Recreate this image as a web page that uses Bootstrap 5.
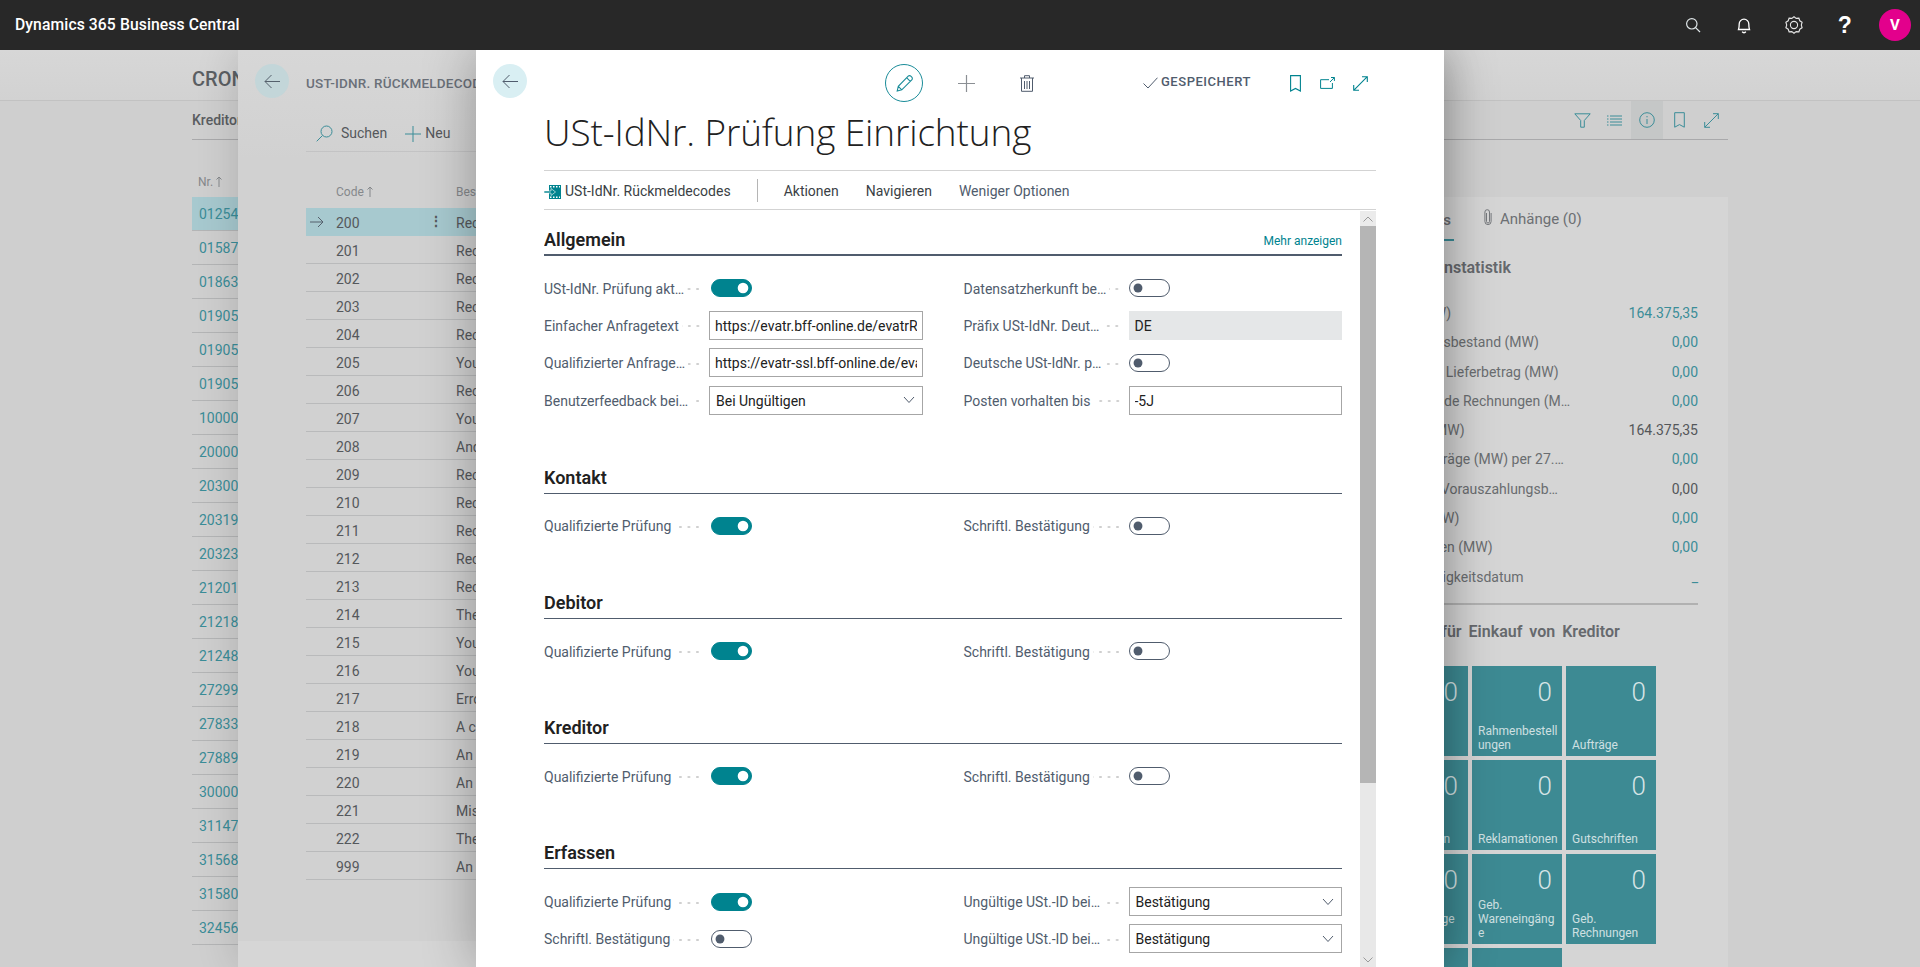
<!DOCTYPE html>
<html lang="de">
<head>
<meta charset="utf-8">
<title>USt-IdNr. Prüfung Einrichtung</title>
<link href="https://cdn.jsdelivr.net/npm/bootstrap@5.3.0/dist/css/bootstrap.min.css" rel="stylesheet">
<style>
:root{--ui:"Open Sans","Noto Sans",sans-serif;--teal:#00838f;--slate:#505c6d;--dimteal:#3b8d98}
html,body{height:100%;overflow:hidden}
body{font-family:Roboto,"Liberation Sans",sans-serif;font-size:14px;color:#212121;background:#cfcfcf}
svg{display:block;flex:none}
.topbar{height:50px;background:#282828;color:#fff;position:relative;z-index:10}
.appname{margin-left:15px;font-size:15.7px;font-weight:500;letter-spacing:.1px}
.topico{width:50.5px}
.avatar{width:32px;height:32px;background:#e3008c;font-weight:700;font-size:15px;margin:0 9px 0 9px}
.bighelp{font-size:23px;font-weight:700;line-height:1;font-family:"Liberation Sans",sans-serif}
.win{position:absolute;top:50px;bottom:0}
/* base page */
.basepage{left:0;right:0;color:#5a5d61;background:#cfcfcf}
.stripe{height:51px;background:linear-gradient(#d7d7d7,#d2d2d2);border-bottom:1px solid #c2c2c2;padding:17px 0 0 192px;font-size:20px;font-weight:500;line-height:24px;color:#5b5f63}
.basebody{margin:0 192px}
.tabline{height:39px;border-bottom:1px solid #a9a9ab;font-weight:500}
.ibtn{width:32.4px;height:38px;margin-top:0}
.ibtn.on{background:#c5c7c7}
.listcol{width:1168px;padding-top:33px}
.colhead{height:24px;padding-left:6px;font-size:12px;line-height:18px;color:#85888b}
.uparrow{display:inline-block;vertical-align:-1px;margin-left:3px}
.nrrow{height:34px;border-bottom:1px solid #b4b5b6;padding-left:7px;line-height:35px;font-size:14px;color:var(--dimteal)}
.nrrow.sel{background:#a7c9cf}
.factbox{width:368px;margin-top:57px;height:780px;overflow:hidden;background:#d5d5d5;padding:0 30px 0 18px}
.factabs{height:44px;font-size:15px;line-height:46px;color:#6c6f73;position:relative}
.factab1{width:76px;border-bottom:2px solid var(--dimteal);height:44px;font-weight:600;text-align:right;padding-right:3px}
.factab2{margin-left:30px}
.factitle{font-weight:600;font-size:16px;line-height:20px;margin:17px 0 21px;color:#66696d}
.factitle.spaced{word-spacing:3px;margin-left:7px}
.statrow{height:29.3px;line-height:29px;font-size:14px;color:#6a6d70}
.statrow .stv{color:var(--dimteal)}
.statrow .stk{color:#54575a}
.facsep{border-top:2px solid #b1b1b1;margin:11px 0 17px}
.tilegrid{display:grid;grid-template-columns:90px 90px 90px;gap:4px;margin-top:24px}
.tile{height:90px;background:#3d8a93;color:#cfe0e2;padding:0 2px 4px 6px;font-size:12px;line-height:14px;white-space:nowrap}
.tile b{font-weight:300;font-size:26px;line-height:30px;margin-top:11px;margin-right:8px;color:#d6e4e6}
/* second window */
.panel2{left:238px;width:1202px;background:linear-gradient(#d7d7d7 0,#d1d1d1 110px);box-shadow:0 0 40px rgba(0,0,0,.16);color:#55585c;z-index:2}
.panelhead{height:64px;padding:14px 0 0 17px}
.backbtn{width:34px;height:34px;background:#c3d6d9}
.panelname{margin-left:17px;font-size:13.5px;font-weight:500;letter-spacing:.2px;color:#6a7079;margin-top:9px}
.paneltools{height:38px;margin-left:68px;border-bottom:1px solid #c3c3c4;padding:2px 0 0 6px}
.paneltools span{font-size:14px}
.m-neu{margin-left:18px}
.panelgrid{margin-left:68px;padding-top:29px}
.chead{height:27px;font-size:12px;line-height:22px;color:#85888b}
.crow{height:28px;border-bottom:1px solid #b9babb;line-height:30px;font-size:14px}
.crow.sel{background:#a7c9cf;border-bottom-color:#a7c9cf}
.c1{width:30px;flex:none}.c2{width:90px;flex:none}.c3{width:30px;flex:none}
.kebab{padding-left:3px;line-height:27px}
.panelfoot{position:absolute;left:0;right:0;bottom:0;height:26px;background:#d6d6d6}
/* front window */
.frontwin{left:476px;width:968px;background:#fff;box-shadow:0 0 50px rgba(0,0,0,.3);z-index:3;overflow:hidden}
.fronttools{height:38px;margin-top:14px;padding-left:17px;align-items:center}
.backbtn2{width:34px;height:34px;background:#d9eff3;margin-top:-4px}
.editcircle{width:38px;height:38px;border:1px solid #1a8c99;margin-left:358px}
.m-plus{margin-left:35px}.m-trash{margin-left:45px}.m-check{margin-left:109px}
.saved{margin-left:3px;font-size:13px;font-weight:500;letter-spacing:.52px;color:#505c6d;line-height:16px;margin-top:-2px}
.m-book{margin-left:39px}.m-open{margin-left:19px}.m-exp{margin-left:18px}
.pagetitle{font-family:var(--ui);font-weight:300;font-size:36.9px;line-height:54px;margin:3px 0 0 68px;height:65px;color:#212121;white-space:nowrap;letter-spacing:-.1px}
.rule{height:1px;background:#d3d3d3;margin:0 68px}
.actionbar{height:38px;margin:0 68px;padding-top:3px;font-size:14px;color:#3b3f45}
.actionbar .sep{width:1px;height:23px;background:#b5b5b5;margin:-2px 26px 0 26px}
.m-a{margin-right:27px}
.muted{color:#505c6d}
.formscroll{height:757px;overflow:hidden;margin-left:68px;margin-right:68px;position:relative}
.scrollrail{position:absolute;top:1px;right:0;width:16px;bottom:0;background:#e8e8e8}
.railbtn{height:15px;background:#ebebeb}
.railbtn.dn{background:none}
.railthumb{height:557px;background:#b5b5b5}
.formin{margin-right:34px;padding-top:18px}
.sechead{height:29px;border-bottom:1px solid var(--slate);margin-top:45.4px;font-size:18px;line-height:26px;font-weight:600;color:#212121}
.sechead.first{margin-top:0;height:28px;border-bottom-width:2px;line-height:24px}
.sechead.second{margin-top:46px}
.moreln{font-size:12px;color:var(--teal);font-weight:400;line-height:20px;margin-top:3px}
.fields{display:grid;grid-template-columns:1fr 1fr;column-gap:41px;margin-top:13.5px}
.fld{height:37.33px}
.lbl{width:165px;flex:none;color:var(--slate);font-size:14px;white-space:nowrap;padding-top:2px}
.dots{flex:1 1 0;height:6px;min-width:0;margin:0 7px 0 3px;background:radial-gradient(circle,#cfcfcf 1px,transparent 1.4px) right center/8.5px 6px repeat-x}
.ctl{width:213.5px;flex:none}
.form-control.bcin,.form-select.bcin{height:29px;min-height:0;border:1px solid #a6a6a6;border-radius:0;padding:1px 5px 0;font-size:14px;color:#212121;box-shadow:none;font-family:inherit}
.form-select.bcin{padding-left:6px;padding-top:2px;background-image:url("data:image/svg+xml,%3Csvg xmlns='http://www.w3.org/2000/svg' viewBox='0 0 12 8'%3E%3Cpath d='M1 1l5 5.5L11 1' fill='none' stroke='%23505c6d'/%3E%3C/svg%3E");background-size:12px 8px;background-position:right 7px center}
.form-control.bcin[readonly]{background:#e5e7e8;border-color:#e5e7e8}
.form-check.bcsw{margin:0 0 0 2px;padding:0;min-height:0;height:18px}
.fld:nth-child(even) .form-check.bcsw{margin-left:0}
.form-check.bcsw .form-check-input{width:41px;height:18px;margin:0;float:none;display:block;border:1px solid var(--slate);border-radius:9px;background-color:#fff;background-position:left center;background-size:auto 100%;box-shadow:none;
 background-image:url("data:image/svg+xml,%3Csvg xmlns='http://www.w3.org/2000/svg' viewBox='-9 -9 18 18'%3E%3Ccircle r='5' fill='%23505c6d'/%3E%3C/svg%3E")}
.form-check.bcsw .form-check-input:checked{background-color:var(--teal);border-color:var(--teal);background-position:right center;
 background-image:url("data:image/svg+xml,%3Csvg xmlns='http://www.w3.org/2000/svg' viewBox='-9 -9 18 18'%3E%3Ccircle r='6' fill='%23fff'/%3E%3C/svg%3E")}
</style>
</head>
<body>
<header class="topbar d-flex align-items-center">
  <div class="appname flex-grow-1">Dynamics 365 Business Central</div>
  <div class="topico d-flex justify-content-center"><svg width="16" height="16" viewBox="0 0 16 16" fill="none" stroke="#dfe6e8" stroke-width="1.2"><circle cx="6.8" cy="6.8" r="5.2"/><path d="M10.6 10.6L15 15"/></svg></div>
  <div class="topico d-flex justify-content-center"><svg width="16" height="18" viewBox="0 0 16 18" fill="none" stroke="#fff" stroke-width="1.3"><path d="M2.5 13.5c.6-1.5.7-2.8.7-5.5a4.8 4.8 0 0 1 9.6 0c0 2.7.1 4 .7 5.5z"/><path d="M6.2 15.6a2 2 0 0 0 3.6 0"/></svg></div>
  <div class="topico d-flex justify-content-center"><svg width="18" height="18" viewBox="0 0 18 18" fill="none" stroke="#e6e6e6" stroke-width="1.1"><circle cx="9" cy="9" r="3.6"/><path d="M9 .8l2.2 1.6 2.7-.2.9 2.6 2.3 1.4-.8 2.8.8 2.8-2.3 1.4-.9 2.6-2.7-.2L9 17.2l-2.2-1.6-2.7.2-.9-2.6-2.3-1.4L1.700 9 .9 6.2l2.3-1.4.9-2.6 2.7.2z"/></svg></div>
  <div class="topico text-center bighelp">?</div>
  <div class="avatar rounded-circle d-flex align-items-center justify-content-center">V</div>
</header>

<main>
<section class="win basepage">
  <div class="stripe">CRONUS</div>
  <div class="basebody">
    <div class="tabline d-flex align-items-center justify-content-between">
      <span>Kreditoren</span>
      <div class="d-flex align-items-center">
        <div class="ibtn d-flex align-items-center justify-content-center"><svg width="17" height="15" viewBox="0 0 17 15" fill="none" stroke="#3b8d98" stroke-width="1"><path d="M.8.8h15.400L10.300 7.500v6.700H6.700V7.500z"/></svg></div>
        <div class="ibtn d-flex align-items-center justify-content-center"><svg width="15" height="11" viewBox="0 0 15 11" stroke="#3b8d98" stroke-width="1"><path d="M0 1h1.500M3 1h12M0 4h1.500M3 4h12M0 7h1.500M3 7h12M0 10h1.500M3 10h12"/></svg></div>
        <div class="ibtn on d-flex align-items-center justify-content-center"><svg width="16" height="16" viewBox="0 0 16 16" fill="none" stroke="#3b8d98" stroke-width="1"><circle cx="8" cy="8" r="7.300"/><path d="M8 7v5M8 4v1.300"/></svg></div>
        <div class="ibtn d-flex align-items-center justify-content-center"><svg width="11" height="16" viewBox="0 0 11 16" fill="none" stroke="#3b8d98" stroke-width="1"><path d="M.7.700h9.600v14.500L5.500 12.600.7 15.200z"/></svg></div>
        <div class="ibtn d-flex align-items-center justify-content-center"><svg width="15" height="15" viewBox="0 0 15 15" fill="none" stroke="#3b8d98" stroke-width="1"><path d="M.7 14.300L14.300.700M9 .7h5.300V6M.7 9v5.300H6"/></svg></div>
      </div>
    </div>
    <div class="d-flex">
      <div class="listcol">
        <div class="colhead">Nr.<svg class="uparrow d-inline-block" width="6" height="11" viewBox="0 0 6 11" fill="none" stroke="#85888b"><path d="M3 11V1M.5 3.500L3 1l2.500 2.500"/></svg></div>
        <div class="nrrow sel">012545</div><div class="nrrow">015871</div><div class="nrrow">018630</div><div class="nrrow">019052</div><div class="nrrow">019053</div><div class="nrrow">019054</div><div class="nrrow">100001</div><div class="nrrow">200001</div><div class="nrrow">203001</div><div class="nrrow">203191</div><div class="nrrow">203231</div><div class="nrrow">212015</div><div class="nrrow">212187</div><div class="nrrow">212483</div><div class="nrrow">272993</div><div class="nrrow">278331</div><div class="nrrow">278899</div><div class="nrrow">300001</div><div class="nrrow">311474</div><div class="nrrow">315689</div><div class="nrrow">315802</div><div class="nrrow">324567</div>
      </div>
      <aside class="factbox">
        <div class="factabs d-flex">
          <div class="factab1">Details</div>
          <div class="factab2 d-flex align-items-center gap-2"><svg class="mb-1" width="8" height="16" viewBox="0 0 8 16" fill="none" stroke="#75787c" stroke-width="1"><path d="M2.500 4v8.500a1.500 1.500 0 0 0 3 0V3a2.300 2.300 0 0 0-4.600 0v9.500a3.100 3.100 0 0 0 6.200 0V4"/></svg><span>Anhänge (0)</span></div>
        </div>
        <div class="factitle">Kreditorenstatistik</div>
        <div class="statrow d-flex justify-content-between"><span>Saldo (MW)</span><span class="stv">164.375,35</span></div>
        <div class="statrow d-flex justify-content-between"><span>Bestellungsbestand (MW)</span><span class="stv">0,00</span></div>
        <div class="statrow d-flex justify-content-between"><span>Nicht fakt. Lieferbetrag (MW)</span><span class="stv">0,00</span></div>
        <div class="statrow d-flex justify-content-between"><span>Ausstehende Rechnungen (M…</span><span class="stv">0,00</span></div>
        <div class="statrow d-flex justify-content-between"><span>Gesamt (MW)</span><span class="stk">164.375,35</span></div>
        <div class="statrow d-flex justify-content-between"><span>Fällige Beträge (MW) per 27.…</span><span class="stv">0,00</span></div>
        <div class="statrow d-flex justify-content-between"><span>Gezahlter Vorauszahlungsb…</span><span class="stk">0,00</span></div>
        <div class="statrow d-flex justify-content-between"><span>Kosten (MW)</span><span class="stv">0,00</span></div>
        <div class="statrow d-flex justify-content-between"><span>Gutschriften (MW)</span><span class="stv">0,00</span></div>
        <div class="statrow d-flex justify-content-between"><span>Erstes Fälligkeitsdatum</span><span class="stv">_</span></div>
        <div class="facsep"></div>
        <div class="factitle spaced">Belege für Einkauf von Kreditor</div>
        <div class="tilegrid">
          <div class="tile d-flex flex-column"><b class="text-end">0</b><span class="mt-auto">Anfragen</span></div>
          <div class="tile d-flex flex-column"><b class="text-end">0</b><span class="mt-auto">Rahmenbestell<br>ungen</span></div>
          <div class="tile d-flex flex-column"><b class="text-end">0</b><span class="mt-auto">Aufträge</span></div>
          <div class="tile d-flex flex-column"><b class="text-end">0</b><span class="mt-auto">Rechnungen</span></div>
          <div class="tile d-flex flex-column"><b class="text-end">0</b><span class="mt-auto">Reklamationen</span></div>
          <div class="tile d-flex flex-column"><b class="text-end">0</b><span class="mt-auto">Gutschriften</span></div>
          <div class="tile d-flex flex-column"><b class="text-end">0</b><span class="mt-auto">Lieferanträge<br>offen</span></div>
          <div class="tile d-flex flex-column"><b class="text-end">0</b><span class="mt-auto">Geb.<br>Wareneingäng<br>e</span></div>
          <div class="tile d-flex flex-column"><b class="text-end">0</b><span class="mt-auto">Geb.<br>Rechnungen</span></div>
          <div class="tile"></div><div class="tile"></div>
        </div>
      </aside>
    </div>
  </div>
</section>

<section class="win panel2">
  <div class="panelhead d-flex">
    <div class="backbtn rounded-circle d-flex align-items-center justify-content-center"><svg width="17" height="15" viewBox="0 0 17 15" fill="none" stroke="#55606c" stroke-width="1"><path d="M16 7.500H1M7.500 1L1 7.500 7.500 14"/></svg></div>
    <div class="panelname">UST-IDNR. RÜCKMELDECODES</div>
  </div>
  <div class="paneltools d-flex align-items-center">
    <svg class="ms-1" width="17" height="17" viewBox="0 0 17 17" fill="none" stroke="#3b8d98" stroke-width="1"><circle cx="10.500" cy="6.500" r="5.500"/><path d="M6.500 10.500L.7 16.300"/></svg>
    <span class="ms-2">Suchen</span>
    <svg class="m-neu" width="16" height="16" viewBox="0 0 16 16" stroke="#3b8d98" stroke-width="1"><path d="M8 0v16M0 8h16"/></svg>
    <span class="ms-1">Neu</span>
  </div>
  <div class="panelgrid">
    <div class="chead d-flex"><div class="c1"></div><div class="c2">Code<svg class="uparrow d-inline-block" width="6" height="11" viewBox="0 0 6 11" fill="none" stroke="#85888b"><path d="M3 11V1M.5 3.500L3 1l2.500 2.500"/></svg></div><div class="c3"></div><div>Beschreibung</div></div>
    <div class="crow sel d-flex"><div class="c1 d-flex align-items-center ps-1"><svg width="14" height="12" viewBox="0 0 14 12" fill="none" stroke="#55606c" stroke-width="1"><path d="M0 6h13M8 1l5 5-5 5"/></svg></div><div class="c2">200</div><div class="c3 kebab fw-bold">⋮</div><div>Record</div></div>
    <div class="crow d-flex"><div class="c1"></div><div class="c2">201</div><div class="c3"></div><div>Record</div></div>
    <div class="crow d-flex"><div class="c1"></div><div class="c2">202</div><div class="c3"></div><div>Record</div></div>
    <div class="crow d-flex"><div class="c1"></div><div class="c2">203</div><div class="c3"></div><div>Record</div></div>
    <div class="crow d-flex"><div class="c1"></div><div class="c2">204</div><div class="c3"></div><div>Record</div></div>
    <div class="crow d-flex"><div class="c1"></div><div class="c2">205</div><div class="c3"></div><div>You</div></div>
    <div class="crow d-flex"><div class="c1"></div><div class="c2">206</div><div class="c3"></div><div>Record</div></div>
    <div class="crow d-flex"><div class="c1"></div><div class="c2">207</div><div class="c3"></div><div>You</div></div>
    <div class="crow d-flex"><div class="c1"></div><div class="c2">208</div><div class="c3"></div><div>And</div></div>
    <div class="crow d-flex"><div class="c1"></div><div class="c2">209</div><div class="c3"></div><div>Record</div></div>
    <div class="crow d-flex"><div class="c1"></div><div class="c2">210</div><div class="c3"></div><div>Record</div></div>
    <div class="crow d-flex"><div class="c1"></div><div class="c2">211</div><div class="c3"></div><div>Record</div></div>
    <div class="crow d-flex"><div class="c1"></div><div class="c2">212</div><div class="c3"></div><div>Record</div></div>
    <div class="crow d-flex"><div class="c1"></div><div class="c2">213</div><div class="c3"></div><div>Record</div></div>
    <div class="crow d-flex"><div class="c1"></div><div class="c2">214</div><div class="c3"></div><div>The</div></div>
    <div class="crow d-flex"><div class="c1"></div><div class="c2">215</div><div class="c3"></div><div>You</div></div>
    <div class="crow d-flex"><div class="c1"></div><div class="c2">216</div><div class="c3"></div><div>You</div></div>
    <div class="crow d-flex"><div class="c1"></div><div class="c2">217</div><div class="c3"></div><div>Error</div></div>
    <div class="crow d-flex"><div class="c1"></div><div class="c2">218</div><div class="c3"></div><div>A c</div></div>
    <div class="crow d-flex"><div class="c1"></div><div class="c2">219</div><div class="c3"></div><div>An</div></div>
    <div class="crow d-flex"><div class="c1"></div><div class="c2">220</div><div class="c3"></div><div>An</div></div>
    <div class="crow d-flex"><div class="c1"></div><div class="c2">221</div><div class="c3"></div><div>Mis</div></div>
    <div class="crow d-flex"><div class="c1"></div><div class="c2">222</div><div class="c3"></div><div>The</div></div>
    <div class="crow d-flex"><div class="c1"></div><div class="c2">999</div><div class="c3"></div><div>An</div></div>
  </div>
  <div class="panelfoot"></div>
</section>

<section class="win frontwin d-flex flex-column">
  <div class="fronttools d-flex">
    <div class="backbtn2 rounded-circle d-flex align-items-center justify-content-center"><svg width="17" height="15" viewBox="0 0 17 15" fill="none" stroke="#505c6d" stroke-width="1"><path d="M16 7.500H1M7.500 1L1 7.500 7.500 14"/></svg></div>
    <div class="editcircle rounded-circle d-flex align-items-center justify-content-center"><svg width="17" height="17" viewBox="0 0 17 17" fill="none" stroke="#1a8c99" stroke-width="1.100"><path d="M12.200 1.200a1.800 1.800 0 0 1 2.600 0l1 1a1.800 1.800 0 0 1 0 2.600L5.800 14.800l-4.600 1.200 1.100-4.700zM2.300 11.300l3.500 3.500M10.800 2.800l3.500 3.500"/></svg></div>
    <svg class="m-plus" width="17" height="17" viewBox="0 0 17 17" stroke="#8b8f94" stroke-width="1.200"><path d="M8.500 0v17M0 8.500h17"/></svg>
    <svg class="m-trash" width="14" height="17" viewBox="0 0 14 17" fill="none" stroke="#505c6d" stroke-width="1"><path d="M0 3h14M1.500 3v13.300h11V3M4.500 3V.7h5V3M4.500 6v8M7 6v8M9.500 6v8"/></svg>
    <svg class="m-check" width="15" height="12" viewBox="0 0 15 12" fill="none" stroke="#505c6d" stroke-width="1"><path d="M.5 6.500L5 11 14.500.7"/></svg>
    <span class="saved">GESPEICHERT</span>
    <svg class="m-book" width="11" height="17" viewBox="0 0 11 17" fill="none" stroke="#00838f" stroke-width="1.100"><path d="M.6.600h9.800v15.400L5.500 13.400.6 16z"/></svg>
    <svg class="m-open" width="15" height="12" viewBox="0 0 15 12" fill="none" stroke="#00838f" stroke-width="1"><path d="M9 2.700H.6v8.700h11.800V6M14.400.5L10 5M11 .5h3.400v3.400"/></svg>
    <svg class="m-exp" width="15" height="15" viewBox="0 0 15 15" fill="none" stroke="#00838f" stroke-width="1.100"><path d="M.7 14.300L14.300.700M9 .7h5.300V6M.7 9v5.300H6"/></svg>
  </div>
  <h1 class="pagetitle">USt-IdNr. Prüfung Einrichtung</h1>
  <div class="rule"></div>
  <div class="actionbar d-flex align-items-center">
    <svg class="me-1" width="17" height="14" viewBox="0 0 17 14"><rect x="5" width="12" height="14" fill="#00838f"/><path d="M6 1h1.500v1.500H6zM9 1h1.500v1.500H9zM12 1h1.500v1.500H12zM15 1h1v1.500h-1zM6 11.500h1.500V13H6zM9 11.500h1.500V13H9zM12 11.500h1.500V13H12zM15 11.500h1V13h-1z" fill="#fff"/><path d="M0 6h7V3.500L11.500 7 7 10.500V8H0z" fill="#00838f" stroke="#fff" stroke-width=".6"/></svg>
    <span>USt-IdNr. Rückmeldecodes</span>
    <span class="sep"></span>
    <span class="m-a">Aktionen</span>
    <span class="m-a">Navigieren</span>
    <span class="muted">Weniger Optionen</span>
  </div>
  <div class="rule"></div>
  <div class="formscroll">
    <div class="scrollrail d-flex flex-column">
      <div class="railbtn d-flex align-items-center justify-content-center"><svg width="10" height="6" viewBox="0 0 10 6" fill="none" stroke="#9a9a9a"><path d="M.5 5.500L5 1l4.500 4.500"/></svg></div>
      <div class="railthumb"></div>
      <div class="railbtn dn mt-auto d-flex align-items-center justify-content-center"><svg width="10" height="6" viewBox="0 0 10 6" fill="none" stroke="#9a9a9a"><path d="M.5 .5L5 5l4.500-4.500"/></svg></div>
    </div>
    <div class="formin">
      <div class="sechead first d-flex justify-content-between"><span>Allgemein</span><span class="moreln">Mehr anzeigen</span></div>
      <div class="fields">
        <div class="fld d-flex align-items-center"><div class="lbl d-flex align-items-center"><span>USt-IdNr. Prüfung akt…</span><i class="dots"></i></div><div class="ctl"><div class="form-check form-switch bcsw"><input class="form-check-input" type="checkbox" role="switch" checked aria-label="USt-IdNr. Prüfung aktiv"></div></div></div>
        <div class="fld d-flex align-items-center"><div class="lbl d-flex align-items-center"><span>Datensatzherkunft be…</span><i class="dots"></i></div><div class="ctl"><div class="form-check form-switch bcsw"><input class="form-check-input" type="checkbox" role="switch" aria-label="Datensatzherkunft"></div></div></div>
        <div class="fld d-flex align-items-center"><div class="lbl d-flex align-items-center"><span>Einfacher Anfragetext</span><i class="dots"></i></div><div class="ctl"><input class="form-control bcin" value="https://evatr.bff-online.de/evatrRPC" aria-label="Einfacher Anfragetext"></div></div>
        <div class="fld d-flex align-items-center"><div class="lbl d-flex align-items-center"><span>Präfix USt-IdNr. Deut…</span><i class="dots"></i></div><div class="ctl"><input class="form-control bcin" readonly value="DE" aria-label="Präfix"></div></div>
        <div class="fld d-flex align-items-center"><div class="lbl d-flex align-items-center"><span>Qualifizierter Anfrage…</span><i class="dots"></i></div><div class="ctl"><input class="form-control bcin" value="https://evatr-ssl.bff-online.de/evatrRPC" aria-label="Qualifizierter Anfragetext"></div></div>
        <div class="fld d-flex align-items-center"><div class="lbl d-flex align-items-center"><span>Deutsche USt-IdNr. p…</span><i class="dots"></i></div><div class="ctl"><div class="form-check form-switch bcsw"><input class="form-check-input" type="checkbox" role="switch" aria-label="Deutsche USt-IdNr."></div></div></div>
        <div class="fld d-flex align-items-center"><div class="lbl d-flex align-items-center"><span>Benutzerfeedback bei…</span><i class="dots"></i></div><div class="ctl"><select class="form-select bcin" aria-label="Benutzerfeedback"><option>Bei Ungültigen</option></select></div></div>
        <div class="fld d-flex align-items-center"><div class="lbl d-flex align-items-center"><span>Posten vorhalten bis</span><i class="dots"></i></div><div class="ctl"><input class="form-control bcin" value="-5J" aria-label="Posten vorhalten bis"></div></div>
      </div>
      <div class="sechead second">Kontakt</div>
      <div class="fields">
        <div class="fld d-flex align-items-center"><div class="lbl d-flex align-items-center"><span>Qualifizierte Prüfung</span><i class="dots"></i></div><div class="ctl"><div class="form-check form-switch bcsw"><input class="form-check-input" type="checkbox" role="switch" checked aria-label="Qualifizierte Prüfung"></div></div></div>
        <div class="fld d-flex align-items-center"><div class="lbl d-flex align-items-center"><span>Schriftl. Bestätigung</span><i class="dots"></i></div><div class="ctl"><div class="form-check form-switch bcsw"><input class="form-check-input" type="checkbox" role="switch" aria-label="Schriftl. Bestätigung"></div></div></div>
      </div>
      <div class="sechead">Debitor</div>
      <div class="fields">
        <div class="fld d-flex align-items-center"><div class="lbl d-flex align-items-center"><span>Qualifizierte Prüfung</span><i class="dots"></i></div><div class="ctl"><div class="form-check form-switch bcsw"><input class="form-check-input" type="checkbox" role="switch" checked aria-label="Qualifizierte Prüfung"></div></div></div>
        <div class="fld d-flex align-items-center"><div class="lbl d-flex align-items-center"><span>Schriftl. Bestätigung</span><i class="dots"></i></div><div class="ctl"><div class="form-check form-switch bcsw"><input class="form-check-input" type="checkbox" role="switch" aria-label="Schriftl. Bestätigung"></div></div></div>
      </div>
      <div class="sechead">Kreditor</div>
      <div class="fields">
        <div class="fld d-flex align-items-center"><div class="lbl d-flex align-items-center"><span>Qualifizierte Prüfung</span><i class="dots"></i></div><div class="ctl"><div class="form-check form-switch bcsw"><input class="form-check-input" type="checkbox" role="switch" checked aria-label="Qualifizierte Prüfung"></div></div></div>
        <div class="fld d-flex align-items-center"><div class="lbl d-flex align-items-center"><span>Schriftl. Bestätigung</span><i class="dots"></i></div><div class="ctl"><div class="form-check form-switch bcsw"><input class="form-check-input" type="checkbox" role="switch" aria-label="Schriftl. Bestätigung"></div></div></div>
      </div>
      <div class="sechead">Erfassen</div>
      <div class="fields">
        <div class="fld d-flex align-items-center"><div class="lbl d-flex align-items-center"><span>Qualifizierte Prüfung</span><i class="dots"></i></div><div class="ctl"><div class="form-check form-switch bcsw"><input class="form-check-input" type="checkbox" role="switch" checked aria-label="Qualifizierte Prüfung"></div></div></div>
        <div class="fld d-flex align-items-center"><div class="lbl d-flex align-items-center"><span>Ungültige USt.-ID bei…</span><i class="dots"></i></div><div class="ctl"><select class="form-select bcin" aria-label="Ungültige USt.-ID"><option>Bestätigung</option></select></div></div>
        <div class="fld d-flex align-items-center"><div class="lbl d-flex align-items-center"><span>Schriftl. Bestätigung</span><i class="dots"></i></div><div class="ctl"><div class="form-check form-switch bcsw"><input class="form-check-input" type="checkbox" role="switch" aria-label="Schriftl. Bestätigung"></div></div></div>
        <div class="fld d-flex align-items-center"><div class="lbl d-flex align-items-center"><span>Ungültige USt.-ID bei…</span><i class="dots"></i></div><div class="ctl"><select class="form-select bcin" aria-label="Ungültige USt.-ID"><option>Bestätigung</option></select></div></div>
      </div>
    </div>
  </div>
</section>
</main>
<script src="https://cdn.jsdelivr.net/npm/bootstrap@5.3.0/dist/js/bootstrap.bundle.min.js"></script>
</body>
</html>
